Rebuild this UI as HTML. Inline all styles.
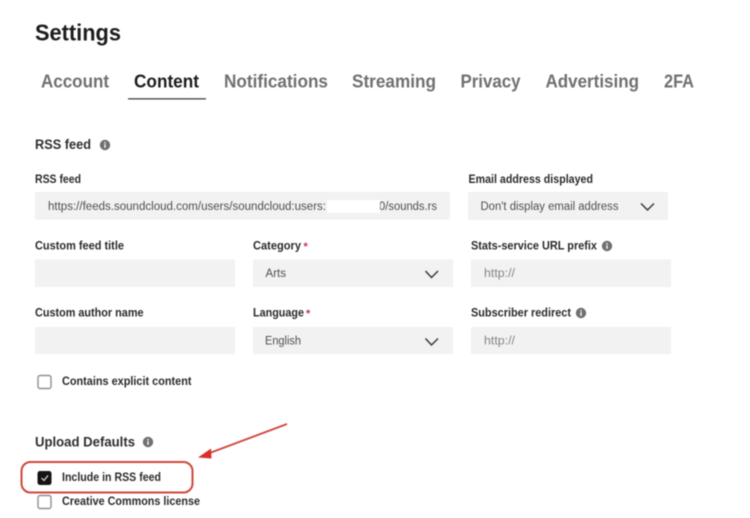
<!DOCTYPE html>
<html><head><meta charset="utf-8"><style>
html,body{margin:0;padding:0;background:#fff;width:750px;height:518px;overflow:hidden}
svg{display:block;font-family:"Liberation Sans",sans-serif;filter:blur(.55px)}
.t{font-weight:700;font-size:18px;fill:#707070}
.l{font-weight:700;font-size:11.5px;fill:#2a2a2a}
.h{font-weight:700;font-size:13.5px;fill:#2e2e2e}
.v{font-size:11.5px;fill:#4e4e4e}
.p{font-size:11.5px;fill:#858585}
.f{fill:#f2f2f2}
.c{fill:none;stroke:#333;stroke-width:1.4}
.b{fill:#fff;stroke:#8f8f8f;stroke-width:1.4}
</style></head><body>
<svg width="750" height="518" viewBox="0 0 750 518" xmlns="http://www.w3.org/2000/svg">
<rect width="750" height="518" fill="#fff"/>
<text x="35" y="40.5" font-size="23" font-weight="700" fill="#1c1c1c" textLength="86" lengthAdjust="spacingAndGlyphs">Settings</text>
<text class="t" x="41" y="87.5" textLength="68" lengthAdjust="spacingAndGlyphs">Account</text>
<text class="t" x="134" y="87.5" style="fill:#1c1c1c" textLength="65" lengthAdjust="spacingAndGlyphs">Content</text>
<text class="t" x="224" y="87.5" textLength="104" lengthAdjust="spacingAndGlyphs">Notifications</text>
<text class="t" x="352" y="87.5" textLength="84" lengthAdjust="spacingAndGlyphs">Streaming</text>
<text class="t" x="460.5" y="87.5" textLength="60" lengthAdjust="spacingAndGlyphs">Privacy</text>
<text class="t" x="545.5" y="87.5" textLength="93.5" lengthAdjust="spacingAndGlyphs">Advertising</text>
<text class="t" x="664" y="87.5" textLength="30" lengthAdjust="spacingAndGlyphs">2FA</text>
<rect x="128" y="98.2" width="78" height="1.3" fill="#444"/>

<text class="h" x="35" y="149" textLength="56" lengthAdjust="spacingAndGlyphs">RSS feed</text>
<circle cx="105" cy="145" r="5.2" fill="#707070"/><rect x="104.3" y="144.2" width="1.4" height="3.6" fill="#fff"/><rect x="104.3" y="142" width="1.4" height="1.4" fill="#fff"/>

<text class="l" x="35" y="183" textLength="46" lengthAdjust="spacingAndGlyphs">RSS feed</text>
<rect class="f" x="35" y="192" width="415" height="27.5"/>
<text class="v" x="48" y="210" textLength="278" lengthAdjust="spacingAndGlyphs">https://feeds.soundcloud.com/users/soundcloud:users:</text>
<text class="v" x="379" y="210" textLength="58" lengthAdjust="spacingAndGlyphs">0/sounds.rs</text>
<rect x="327" y="200" width="53" height="13" fill="#fff"/>

<text class="l" x="468.5" y="183" textLength="124.5" lengthAdjust="spacingAndGlyphs">Email address displayed</text>
<rect class="f" x="468" y="192" width="200" height="28"/>
<text class="v" x="480.5" y="210" textLength="138" lengthAdjust="spacingAndGlyphs">Don't display email address</text>
<path class="c" d="M641 203.5L647.5 210L654 203.5"/>

<text class="l" x="35" y="249.5" textLength="89" lengthAdjust="spacingAndGlyphs">Custom feed title</text>
<rect class="f" x="35" y="259.5" width="200" height="27.5"/>
<text class="l" x="253" y="249.5" textLength="48" lengthAdjust="spacingAndGlyphs">Category</text>
<text x="303.5" y="250" font-size="11" font-weight="700" fill="#c2334d">*</text>
<rect class="f" x="253" y="259.5" width="200" height="27.5"/>
<text class="v" x="265.5" y="277" textLength="20.5" lengthAdjust="spacingAndGlyphs">Arts</text>
<path class="c" d="M425.5 271L431.5 277.5L438 271"/>
<text class="l" x="471" y="249.5" textLength="126" lengthAdjust="spacingAndGlyphs">Stats-service URL prefix</text>
<circle cx="607" cy="246" r="5.2" fill="#707070"/><rect x="606.3" y="245.2" width="1.4" height="3.6" fill="#fff"/><rect x="606.3" y="243" width="1.4" height="1.4" fill="#fff"/>
<rect class="f" x="471" y="259.5" width="200" height="27.5"/>
<text class="p" x="484" y="277" textLength="31" lengthAdjust="spacingAndGlyphs">http://</text>

<text class="l" x="35" y="316.5" textLength="108.5" lengthAdjust="spacingAndGlyphs">Custom author name</text>
<rect class="f" x="35" y="327" width="200" height="27"/>
<text class="l" x="253" y="316.5" textLength="51" lengthAdjust="spacingAndGlyphs">Language</text>
<text x="306" y="317" font-size="11" font-weight="700" fill="#c2334d">*</text>
<rect class="f" x="253" y="327" width="200" height="27"/>
<text class="v" x="265" y="344.5" textLength="36" lengthAdjust="spacingAndGlyphs">English</text>
<path class="c" d="M425.5 338.5L431.5 345L438 338.5"/>
<text class="l" x="471" y="316.5" textLength="100" lengthAdjust="spacingAndGlyphs">Subscriber redirect</text>
<circle cx="581" cy="313" r="5.2" fill="#707070"/><rect x="580.3" y="312.2" width="1.4" height="3.6" fill="#fff"/><rect x="580.3" y="310" width="1.4" height="1.4" fill="#fff"/>
<rect class="f" x="471" y="327" width="200" height="27"/>
<text class="p" x="484" y="344.5" textLength="31" lengthAdjust="spacingAndGlyphs">http://</text>

<rect class="b" x="38" y="375.5" width="13" height="13" rx="2"/>
<text class="l" x="62" y="385" textLength="129.5" lengthAdjust="spacingAndGlyphs">Contains explicit content</text>

<text class="h" x="35" y="446.5" textLength="100" lengthAdjust="spacingAndGlyphs">Upload Defaults</text>
<circle cx="148" cy="442" r="5.2" fill="#707070"/><rect x="147.3" y="441.2" width="1.4" height="3.6" fill="#fff"/><rect x="147.3" y="439" width="1.4" height="1.4" fill="#fff"/>

<rect x="21.5" y="462" width="171" height="30.5" rx="9" fill="none" stroke="#d0473c" stroke-width="2"/>
<rect x="37.5" y="471" width="14" height="14" rx="2.5" fill="#141414"/>
<path d="M41.5 478L44 480.5L48 475.5" fill="none" stroke="#ddd" stroke-width="1.2"/>
<text class="l" x="62" y="481" textLength="99" lengthAdjust="spacingAndGlyphs">Include in RSS feed</text>

<rect class="b" x="38" y="495.5" width="13" height="13" rx="2"/>
<text class="l" x="62" y="505" textLength="138" lengthAdjust="spacingAndGlyphs">Creative Commons license</text>

<path d="M287 424L207 454" fill="none" stroke="#d0473c" stroke-width="1.9"/>
<path d="M198 457.5L211 448.5L211.5 458.5Z" fill="#d8302a"/>
</svg>
</body></html>
